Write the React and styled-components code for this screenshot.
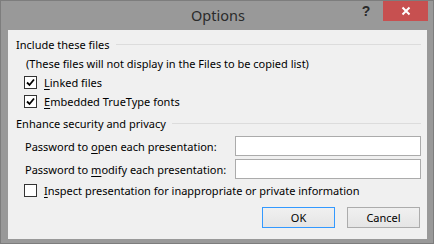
import React from "react";
import styled, { createGlobalStyle } from "styled-components";

const Global = createGlobalStyle`
  html, body { margin: 0; padding: 0; background: #999999; }
  body { font-family: "Noto Sans", "Segoe UI", sans-serif; }
`;

const Window = styled.div`
  width: 434px;
  height: 244px;
  box-sizing: border-box;
  background: #999999;
  border: 1px solid #7d7d7d;
  display: flex;
  flex-direction: column;
  overflow: hidden;
`;

const TitleBar = styled.div`
  height: 29px;
  position: relative;
  display: flex;
  align-items: center;
  justify-content: center;
`;

const Title = styled.div`
  font-size: 14.5px;
  color: #2b2b2b;
  margin-top: -1px;
  margin-left: 2px;
`;

const Controls = styled.div`
  position: absolute;
  top: 0;
  right: 5px;
  display: flex;
  align-items: flex-start;
`;

const HelpBtn = styled.div`
  width: 30px;
  height: 20px;
  display: flex;
  align-items: center;
  justify-content: center;
  font: bold 14px "Liberation Sans", sans-serif;
  color: #2a2a2a;
  margin-right: 2px;
`;

const CloseBtn = styled.div`
  width: 45px;
  height: 20px;
  background: #c75050;
  display: flex;
  align-items: center;
  justify-content: center;
`;

const Client = styled.div`
  flex: 1;
  margin: 0 6px 4px 7px;
  background: #f0f0f0;
  padding: 7px 6px 0 8px;
  display: flex;
  flex-direction: column;
  font-size: 11px;
  color: #000;
`;

const GroupHead = styled.div`
  height: 15px;
  display: flex;
  align-items: center;
  gap: 6px;
  margin-top: ${(p) => p.$mt || 0}px;
  &::after {
    content: "";
    flex: 1;
    height: 1px;
    background: #dcdcdc;
  }
`;

const Note = styled.div`
  height: 15px;
  display: flex;
  align-items: center;
  margin: 4px 0 0 10px;
`;

const CheckRow = styled.label`
  height: 14px;
  display: flex;
  align-items: center;
  gap: 7px;
  margin: ${(p) => p.$mt || 0}px 0 0 8px;
`;

const Box = styled.span`
  width: 13px;
  height: 13px;
  box-sizing: border-box;
  border: 1px solid #333333;
  background: #ffffff;
  display: flex;
  align-items: center;
  justify-content: center;
`;

const FieldRow = styled.div`
  height: 20px;
  display: flex;
  align-items: center;
  justify-content: space-between;
  margin: ${(p) => p.$mt || 0}px 0 0 9px;
`;

const Input = styled.div`
  width: 186px;
  height: 20px;
  box-sizing: border-box;
  border: 1px solid #ababab;
  background: #ffffff;
`;

const Buttons = styled.div`
  display: flex;
  justify-content: flex-end;
  gap: 12px;
  margin: 10px 1px 0 0;
`;

const Button = styled.div`
  width: 73px;
  height: 21px;
  box-sizing: border-box;
  border: 1px solid ${(p) => (p.$primary ? "#3399ff" : "#acacac")};
  background: linear-gradient(#f0f0f0, #e5e5e5);
  display: flex;
  align-items: center;
  justify-content: center;
`;

const U = styled.span`
  text-decoration: underline;
  text-underline-offset: 2px;
`;

const Check = () => (
  <svg width="9" height="9" viewBox="0 0 9 9">
    <path d="M1 4.5 L3.5 7 L8 1.5" fill="none" stroke="#000" strokeWidth="1.8" />
  </svg>
);

export default function App() {
  return (
    <>
      <Global />
      <Window>
        <TitleBar>
          <Title>Options</Title>
          <Controls>
            <HelpBtn>?</HelpBtn>
            <CloseBtn>
              <svg width="10" height="10" viewBox="0 0 10 10">
                <path d="M1.5 1.5 L8.5 8.5 M8.5 1.5 L1.5 8.5" stroke="#fff" strokeWidth="2" />
              </svg>
            </CloseBtn>
          </Controls>
        </TitleBar>
        <Client>
          <GroupHead>Include these files</GroupHead>
          <Note>(These files will not display in the Files to be copied list)</Note>
          <CheckRow $mt={4}>
            <Box><Check /></Box>
            <span><U>L</U>inked files</span>
          </CheckRow>
          <CheckRow $mt={5}>
            <Box><Check /></Box>
            <span><U>E</U>mbedded TrueType fonts</span>
          </CheckRow>
          <GroupHead $mt={8}>Enhance security and privacy</GroupHead>
          <FieldRow $mt={5}>
            <span>Password to <U>o</U>pen each presentation:</span>
            <Input />
          </FieldRow>
          <FieldRow $mt={3}>
            <span>Password to <U>m</U>odify each presentation:</span>
            <Input />
          </FieldRow>
          <CheckRow $mt={4}>
            <Box />
            <span><U>I</U>nspect presentation for inappropriate or private information</span>
          </CheckRow>
          <Buttons>
            <Button $primary>OK</Button>
            <Button>Cancel</Button>
          </Buttons>
        </Client>
      </Window>
    </>
  );
}
